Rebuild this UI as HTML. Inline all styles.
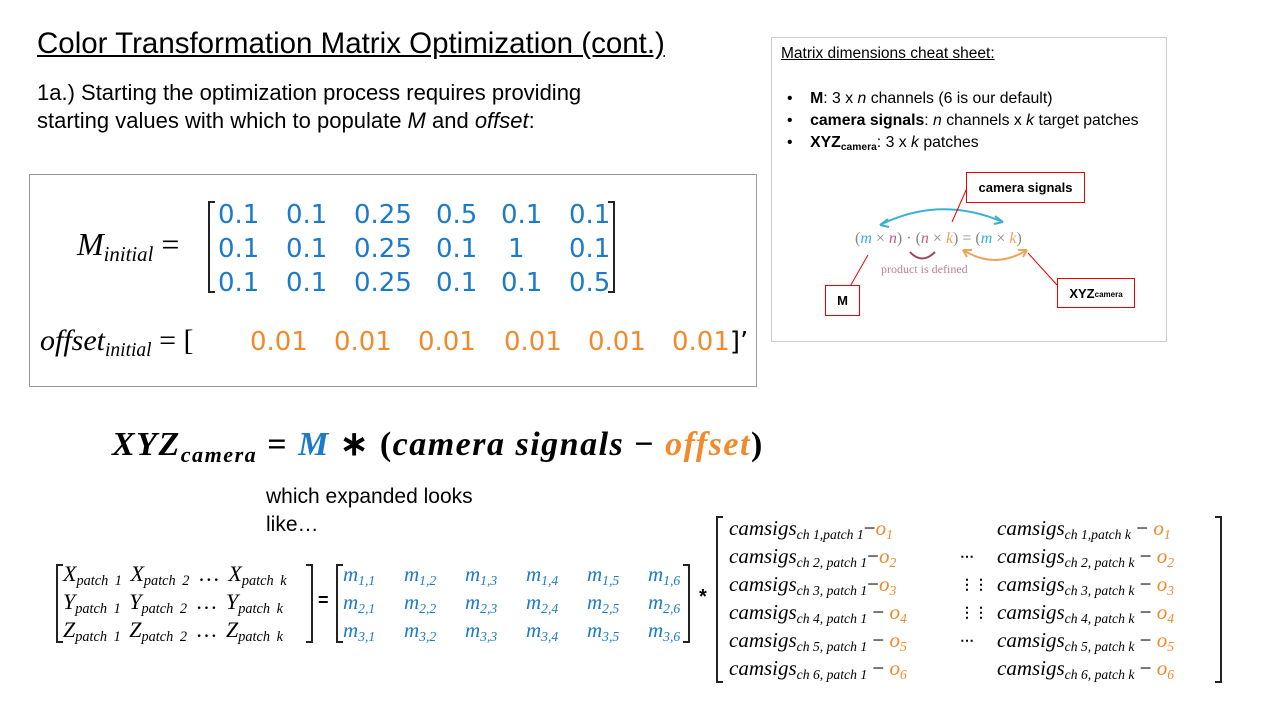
<!DOCTYPE html>
<html><head><meta charset="utf-8"><style>
body{margin:0;width:1280px;height:720px;background:#fff;position:relative;overflow:hidden;font-family:"Liberation Sans",sans-serif;color:#000}
.a{position:absolute;white-space:nowrap}
.s{font-family:"Liberation Serif",serif;font-style:italic}
.b{color:#1c7ac8}.o{color:#f08a2c}
.br{position:absolute;border:2px solid #222}
.bl{border-right:none;width:5px}.brr{border-left:none;width:5px}
sub{font-size:65%;vertical-align:baseline;position:relative;top:0.3em;line-height:0}
.red{position:absolute;border:1.5px solid #e00;background:#fff;font-weight:bold;font-size:13px;display:flex;align-items:center;justify-content:center}
.r{height:28px;line-height:28px}
.c{display:inline-block;width:61px}
</style></head><body>
<div class="a" style="left:37px;top:27px;font-size:29.5px;text-decoration:underline">Color Transformation Matrix Optimization (cont.)</div>
<div class="a" style="left:37px;top:79px;font-size:22px;line-height:28px">1a.) Starting the optimization process requires providing<br>starting values with which to populate <i>M</i> and <i>offset</i>:</div>

<div style="position:absolute;left:29px;top:174px;width:726px;height:211px;border:1.5px solid #999"></div>
<div class="a s" style="left:77px;top:226px;font-size:32px">M<sub>initial</sub> <span style="font-style:normal">=</span></div>
<div class="br bl" style="left:208px;top:201px;height:88px"></div>
<div class="br brr" style="left:608px;top:201px;height:88px"></div>
<div class="a b" style="left:218px;top:198px;font-size:26px;line-height:34px;font-family:'DejaVu Sans',sans-serif">
<span style="display:inline-block;width:68px">0.1</span><span style="display:inline-block;width:68px">0.1</span><span style="display:inline-block;width:82px">0.25</span><span style="display:inline-block;width:65px">0.5</span><span style="display:inline-block;width:68px">0.1</span>0.1<br>
<span style="display:inline-block;width:68px">0.1</span><span style="display:inline-block;width:68px">0.1</span><span style="display:inline-block;width:82px">0.25</span><span style="display:inline-block;width:72px">0.1</span><span style="display:inline-block;width:61px">1</span>0.1<br>
<span style="display:inline-block;width:68px">0.1</span><span style="display:inline-block;width:68px">0.1</span><span style="display:inline-block;width:82px">0.25</span><span style="display:inline-block;width:65px">0.1</span><span style="display:inline-block;width:68px">0.1</span>0.5</div>
<div class="a s" style="left:40px;top:324px;font-size:30px">offset<sub>initial</sub> <span style="font-style:normal">= [</span></div>
<div class="a o" style="left:250px;top:327px;font-size:26px;font-family:'DejaVu Sans',sans-serif">
<span style="display:inline-block;width:84px">0.01</span><span style="display:inline-block;width:84px">0.01</span><span style="display:inline-block;width:86px">0.01</span><span style="display:inline-block;width:84px">0.01</span><span style="display:inline-block;width:84px">0.01</span>0.01<span style="color:#000">]’</span></div>

<div style="position:absolute;left:771px;top:37px;width:394px;height:303px;border:1px solid #ccc"></div>
<div class="a" style="left:781px;top:45px;font-size:15.5px;text-decoration:underline">Matrix dimensions cheat sheet:</div>
<div class="a" style="left:787px;top:88px;font-size:15.8px;line-height:22px">•&nbsp;&nbsp;&nbsp;&nbsp;<b>M</b>: 3 x <i>n</i> channels (6 is our default)<br>•&nbsp;&nbsp;&nbsp;&nbsp;<b>camera signals</b>: <i>n</i> channels x <i>k</i> target patches<br>•&nbsp;&nbsp;&nbsp;&nbsp;<b>XYZ<sub>camera</sub></b>: 3 x <i>k</i> patches</div>
<svg class="a" style="left:770px;top:160px" width="400" height="160">
<path d="M110 65 Q170 35 233 62" fill="none" stroke="#3ab0d4" stroke-width="2"/><path d="M110 65l8-6M110 65l9 2M233 62l-8-6M233 62l-9 2" stroke="#3ab0d4" stroke-width="2"/>
<path d="M193 90 Q225 110 257 90" fill="none" stroke="#eaa55c" stroke-width="2"/><path d="M193 90l9 0M193 90l4 7M257 90l-9 0M257 90l-4 7" stroke="#eaa55c" stroke-width="2"/>
<path d="M140 92 Q152 105 165 92" fill="none" stroke="#a04560" stroke-width="2"/>
<line x1="197" y1="28" x2="182" y2="62" stroke="#e00"/><line x1="78" y1="130" x2="98" y2="95" stroke="#e00"/><line x1="287" y1="125" x2="258" y2="93" stroke="#e00"/>
<text x="85" y="83" font-family="Liberation Serif,serif" font-size="16" fill="#888">(<tspan fill="#3ab0d4" font-style="italic">m</tspan> × <tspan fill="#c0607a" font-style="italic">n</tspan>) · (<tspan fill="#c0607a" font-style="italic">n</tspan> × <tspan fill="#eaa55c" font-style="italic">k</tspan>) = (<tspan fill="#3ab0d4" font-style="italic">m</tspan> × <tspan fill="#eaa55c" font-style="italic">k</tspan>)</text>
<text x="111" y="113" font-family="Liberation Serif,serif" font-size="12" fill="#c08095">product is defined</text>
</svg>
<div class="red" style="left:966px;top:172px;width:117px;height:29px">camera signals</div>
<div class="red" style="left:825px;top:285px;width:33px;height:29px">M</div>
<div class="red" style="left:1057px;top:278px;width:76px;height:28px">XYZ<sub style="font-size:8px">camera</sub></div>

<div class="a s" style="left:112px;top:424px;font-size:34px;font-weight:bold;letter-spacing:1.5px">XYZ<sub>camera</sub> <span style="font-style:normal">=</span> <span class="b">M</span> <span style="font-style:normal">∗ (</span>camera signals <span style="font-style:normal">−</span> <span class="o">offset</span><span style="font-style:normal">)</span></div>
<div class="a" style="left:266px;top:483px;font-size:21px;line-height:28px">which expanded looks<br>like…</div>

<div class="br bl" style="left:56px;top:564px;height:75px"></div>
<div class="br brr" style="left:306px;top:564px;height:75px"></div>
<div class="a s" style="left:63px;top:560px;font-size:22px;word-spacing:3px">
<div class="r">X<sub>patch 1</sub> X<sub>patch 2</sub> <span style="font-style:normal">…</span> X<sub>patch k</sub></div>
<div class="r">Y<sub>patch 1</sub> Y<sub>patch 2</sub> <span style="font-style:normal">…</span> Y<sub>patch k</sub></div>
<div class="r">Z<sub>patch 1</sub> Z<sub>patch 2</sub> <span style="font-style:normal">…</span> Z<sub>patch k</sub></div></div>
<div class="a" style="left:318px;top:590px;font-size:18px;font-weight:bold">=</div>
<div class="br bl" style="left:336px;top:564px;height:75px"></div>
<div class="br brr" style="left:683px;top:564px;height:75px"></div>
<div class="a s b" style="left:343px;top:560px;font-size:21px">
<div class="r"><span class="c">m<sub>1,1</sub></span><span class="c">m<sub>1,2</sub></span><span class="c">m<sub>1,3</sub></span><span class="c">m<sub>1,4</sub></span><span class="c">m<sub>1,5</sub></span>m<sub>1,6</sub></div>
<div class="r"><span class="c">m<sub>2,1</sub></span><span class="c">m<sub>2,2</sub></span><span class="c">m<sub>2,3</sub></span><span class="c">m<sub>2,4</sub></span><span class="c">m<sub>2,5</sub></span>m<sub>2,6</sub></div>
<div class="r"><span class="c">m<sub>3,1</sub></span><span class="c">m<sub>3,2</sub></span><span class="c">m<sub>3,3</sub></span><span class="c">m<sub>3,4</sub></span><span class="c">m<sub>3,5</sub></span>m<sub>3,6</sub></div></div>
<div class="a" style="left:699px;top:586px;font-size:20px;font-weight:bold">*</div>

<div class="br bl" style="left:716px;top:516px;height:163px"></div>
<div class="br brr" style="left:1215px;top:516px;height:163px"></div>
<div class="a s" style="left:729px;top:514px;font-size:21px">
<div class="r">camsigs<sub>ch 1,patch 1</sub><span style="font-style:normal">−</span><span class="o">o<sub>1</sub></span></div>
<div class="r">camsigs<sub>ch 2, patch 1</sub><span style="font-style:normal">−</span><span class="o">o<sub>2</sub></span></div>
<div class="r">camsigs<sub>ch 3, patch 1</sub><span style="font-style:normal">−</span><span class="o">o<sub>3</sub></span></div>
<div class="r">camsigs<sub>ch 4, patch 1</sub> <span style="font-style:normal">−</span> <span class="o">o<sub>4</sub></span></div>
<div class="r">camsigs<sub>ch 5, patch 1</sub> <span style="font-style:normal">−</span> <span class="o">o<sub>5</sub></span></div>
<div class="r">camsigs<sub>ch 6, patch 1</sub> <span style="font-style:normal">−</span> <span class="o">o<sub>6</sub></span></div></div>
<div class="a" style="left:960px;top:542px;font-size:14px;line-height:28px;font-weight:bold">⋯<br>⋮⋮<br>⋮⋮<br>⋯</div>
<div class="a s" style="left:997px;top:514px;font-size:21px">
<div class="r">camsigs<sub>ch 1,patch k</sub> <span style="font-style:normal">−</span> <span class="o">o<sub>1</sub></span></div>
<div class="r">camsigs<sub>ch 2, patch k</sub> <span style="font-style:normal">−</span> <span class="o">o<sub>2</sub></span></div>
<div class="r">camsigs<sub>ch 3, patch k</sub> <span style="font-style:normal">−</span> <span class="o">o<sub>3</sub></span></div>
<div class="r">camsigs<sub>ch 4, patch k</sub> <span style="font-style:normal">−</span> <span class="o">o<sub>4</sub></span></div>
<div class="r">camsigs<sub>ch 5, patch k</sub> <span style="font-style:normal">−</span> <span class="o">o<sub>5</sub></span></div>
<div class="r">camsigs<sub>ch 6, patch k</sub> <span style="font-style:normal">−</span> <span class="o">o<sub>6</sub></span></div></div>
</body></html>
